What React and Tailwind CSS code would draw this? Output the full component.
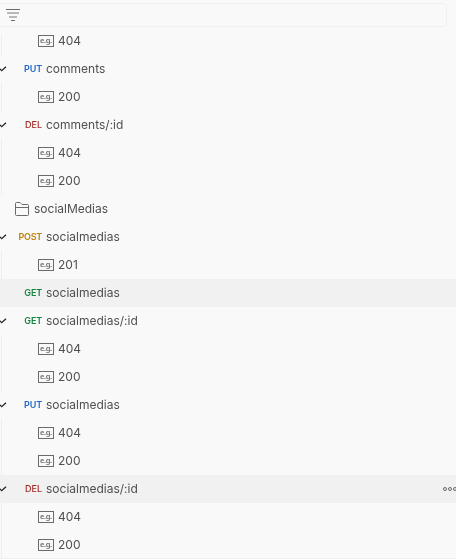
const rows = [
  { kind: 'example', name: '404', first: true },
  { kind: 'request', method: 'PUT', name: 'comments', open: true },
  { kind: 'example', name: '200' },
  { kind: 'request', method: 'DEL', name: 'comments/:id', open: true },
  { kind: 'example', name: '404' },
  { kind: 'example', name: '200' },
  { kind: 'folder', name: 'socialMedias' },
  { kind: 'request', method: 'POST', name: 'socialmedias', open: true },
  { kind: 'example', name: '201' },
  { kind: 'request', method: 'GET', name: 'socialmedias', active: true },
  { kind: 'request', method: 'GET', name: 'socialmedias/:id', open: true },
  { kind: 'example', name: '404' },
  { kind: 'example', name: '200' },
  { kind: 'request', method: 'PUT', name: 'socialmedias', open: true },
  { kind: 'example', name: '404' },
  { kind: 'example', name: '200' },
  { kind: 'request', method: 'DEL', name: 'socialmedias/:id', open: true, active: true, menu: true },
  { kind: 'example', name: '404' },
  { kind: 'example', name: '200' },
];

const methodStyle = {
  PUT: 'text-[#1a66c9] font-semibold tracking-[-0.15px]',
  DEL: 'text-[#a32a24] font-medium',
  POST: 'text-[#b88109] font-semibold tracking-[-0.25px]',
  GET: 'text-[#13853f] font-semibold tracking-[-0.15px]',
};

function FilterIcon() {
  return (
    <svg width="16" height="14" viewBox="0 0 16 14" fill="none" className="ml-[6px]">
      <path d="M0 1.5h14" stroke="#6b6b6b" />
      <path d="M1 5h12M3 9h8" stroke="#777777" strokeWidth="1.1" />
      <path d="M5 12.5h4" stroke="#6b6b6b" />
    </svg>
  );
}

function Chevron() {
  return (
    <svg width="7" height="6" viewBox="0 0 7 6" fill="none" className="block">
      <path d="M-1.5 1.5L1.7 4.7L6 .7" stroke="#212121" strokeWidth="1.2" />
    </svg>
  );
}

function FolderIcon() {
  return (
    <svg width="14" height="14" viewBox="0 0 14 14" fill="none">
      <path d="M.5 12.5V1.5Q.5.5 1.5.5H5L7 2.5H12.5Q13.5 2.5 13.5 3.5V12.5Q13.5 13.5 12.5 13.5H1.5Q.5 13.5.5 12.5ZM.5 5.5H13.5" stroke="#6b6b6b" />
    </svg>
  );
}

function ExampleIcon() {
  return (
    <svg width="16" height="12" viewBox="0 0 16 12" fill="none">
      <rect x=".5" y=".5" width="15" height="11" stroke="#6b6b6b" />
      <text x="2" y="7.5" fontFamily="'Noto Sans', sans-serif" fontSize="7.5" fontWeight="600" fill="#6b6b6b" textLength="12">e.g.</text>
    </svg>
  );
}

function MoreIcon() {
  return (
    <svg width="13" height="6" viewBox="0 0 13 6" fill="none" stroke="#6b6b6b">
      <circle cx="2" cy="3" r="1.5" />
      <circle cx="7" cy="3" r="1.5" />
      <circle cx="12" cy="3" r="1.5" />
    </svg>
  );
}

function Row({ row }) {
  if (row.kind === 'example') {
    return (
      <div className="flex h-7">
        <div className={`ml-px w-px bg-[#ededed] ${row.first ? 'mt-2' : ''}`} />
        <div className="ml-9 flex items-center gap-1">
          <ExampleIcon />
          <span>{row.name}</span>
        </div>
      </div>
    );
  }
  if (row.kind === 'folder') {
    return (
      <div className="flex h-7 items-center gap-[5px] pl-[15px]">
        <FolderIcon />
        <span>{row.name}</span>
      </div>
    );
  }
  return (
    <div className={`flex h-7 items-center ${row.active ? 'bg-[#f1f1f1]' : ''}`}>
      <div className="w-[7px]">{row.open && <Chevron />}</div>
      <span className={`w-[35px] text-right text-[9px] ${methodStyle[row.method]}`}>{row.method}</span>
      <span className="ml-1">{row.name}</span>
      {row.menu && <div className="ml-auto"><MoreIcon /></div>}
    </div>
  );
}

export default function App() {
  return (
    <div className="h-[559px] w-[456px] overflow-hidden border-b border-[#f0f0f0] bg-[#f9f9f9] font-['Inter',sans-serif] text-[12px] leading-4 text-[#505050] antialiased">
      <div className="will-change-[transform,opacity]">
        <div className="h-[27px] pt-[3px]">
          <div className="flex h-6 w-[447px] items-center rounded-r-sm border-y border-r border-[#f0f0f0]">
            <FilterIcon />
          </div>
        </div>
        {rows.map((row, i) => <Row key={i} row={row} />)}
      </div>
    </div>
  );
}
